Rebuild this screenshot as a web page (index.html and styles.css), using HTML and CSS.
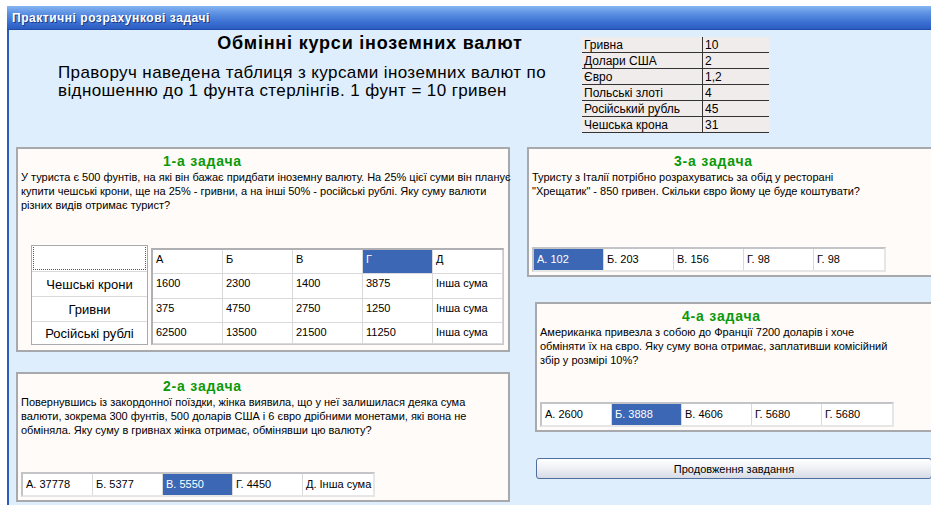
FILE: index.html
```html
<!DOCTYPE html>
<html lang="uk">
<head>
<meta charset="utf-8">
<title>Практичні розрахункові задачі</title>
<link rel="stylesheet" href="styles.css">
</head>
<body>
<div class="window">
  <div class="titlebar">Практичні розрахункові задачі</div>
  <div class="client">
    <header class="top">
      <div class="intro">
        <h1>Обмінні курси іноземних валют</h1>
        <p>Праворуч наведена таблиця з курсами іноземних валют по<br>відношенню до 1 фунта стерлінгів. 1 фунт = 10 гривен</p>
      </div>
      <table class="rates">
        <tr><td>Гривна</td><td>10</td></tr>
        <tr><td>Долари США</td><td>2</td></tr>
        <tr><td>Євро</td><td>1,2</td></tr>
        <tr><td>Польські злоті</td><td>4</td></tr>
        <tr><td>Російський рубль</td><td>45</td></tr>
        <tr><td>Чешська крона</td><td>31</td></tr>
      </table>
    </header>

    <div class="columns">
      <div class="col col-left">
        <section class="task task1">
          <h2>1-а задача</h2>
          <p>У туриста є 500 фунтів, на які він бажає придбати іноземну валюту. На 25% цієї суми він планує<br>купити чешські крони, ще на 25% - гривни, а на інші 50% - російські рублі. Яку суму валюти<br>різних видів отримає турист?</p>
          <div class="matrix">
            <div class="row-heads">
              <div class="rh rh-focus"></div>
              <div class="rh">Чешські крони</div>
              <div class="rh">Гривни</div>
              <div class="rh">Російські рублі</div>
            </div>
            <div class="grid">
              <div class="gc">А</div><div class="gc">Б</div><div class="gc">В</div><div class="gc sel">Г</div><div class="gc">Д</div>
              <div class="gc">1600</div><div class="gc">2300</div><div class="gc">1400</div><div class="gc">3875</div><div class="gc">Інша сума</div>
              <div class="gc">375</div><div class="gc">4750</div><div class="gc">2750</div><div class="gc">1250</div><div class="gc">Інша сума</div>
              <div class="gc">62500</div><div class="gc">13500</div><div class="gc">21500</div><div class="gc">11250</div><div class="gc">Інша сума</div>
            </div>
          </div>
        </section>

        <section class="task task2">
          <h2>2-а задача</h2>
          <p>Повернувшись із закордонної поїздки, жінка виявила, що у неї залишилася деяка сума<br>валюти, зокрема 300 фунтів, 500 доларів США і 6 євро дрібними монетами, які вона не<br>обміняла. Яку суму в гривнах жінка отримає, обмінявши цю валюту?</p>
          <div class="answers">
            <div class="ans">А. 37778</div><div class="ans">Б. 5377</div><div class="ans sel">В. 5550</div><div class="ans">Г. 4450</div><div class="ans">Д. Інша сума</div>
          </div>
        </section>
      </div>

      <div class="col col-right">
        <section class="task task3">
          <h2>3-а задача</h2>
          <p>Туристу з Італії потрібно розрахуватись за обід у ресторані<br>"Хрещатик" - 850 гривен. Скільки євро йому це буде коштувати?</p>
          <div class="answers">
            <div class="ans sel">А. 102</div><div class="ans">Б. 203</div><div class="ans">В. 156</div><div class="ans">Г. 98</div><div class="ans">Г. 98</div>
          </div>
        </section>

        <section class="task task4">
          <h2>4-а задача</h2>
          <p>Американка привезла з собою до Франції 7200 доларів і хоче<br>обміняти їх на євро. Яку суму вона отримає, заплативши комісійний<br>збір у розмірі 10%?</p>
          <div class="answers">
            <div class="ans">А. 2600</div><div class="ans sel">Б. 3888</div><div class="ans">В. 4606</div><div class="ans">Г. 5680</div><div class="ans">Г. 5680</div>
          </div>
        </section>

        <button class="next" type="button">Продовження завдання</button>
      </div>
    </div>
  </div>
</div>
</body>
</html>
```

FILE: styles.css
```css
html, body {
  margin: 0;
  background: #ffffff;
  overflow: hidden;
}

body {
  padding-top: 6px;
  font-family: "Liberation Sans", Arial, sans-serif;
  color: #000;
}

.window {
  margin-left: 7px;
  width: 945px;
}

/* window caption */
.titlebar {
  height: 23px;
  line-height: 24px;
  padding-left: 5px;
  border-bottom: 1px solid #1f4dab;
  background: linear-gradient(#86b5f4 0%, #5e93e3 30%, #3c70d3 70%, #2c5cc1 100%);
  color: #fff;
  font-family: "Liberation Sans", Arial, sans-serif;
  font-size: 12px;
  font-weight: bold;
  letter-spacing: 0.55px;
  text-shadow: 1px 1px 0 #1b3b86;
}

.client {
  height: 480px;
  padding-left: 7px;
  background: #dfeefd;
  border-left: 2px solid #2a5bc0;
}

/* heading + rates table */
.top {
  display: flex;
  height: 117px;
}

.intro {
  width: 566px;
}

.intro h1 {
  width: 420px;
  margin: 3px 0 0 144px;
  font-size: 18px;
  line-height: 20px;
  font-weight: bold;
  letter-spacing: 0.8px;
  text-align: center;
  white-space: nowrap;
}

.intro p {
  margin: 11px 0 0 42px;
  font-size: 17px;
  line-height: 18px;
  letter-spacing: 0.4px;
  white-space: nowrap;
}

.rates {
  margin-top: 7px;
  align-self: flex-start;
  border-collapse: collapse;
  font-size: 12px;
  background: #f1ecec;
}

.rates td {
  height: 14px;
  line-height: 14px;
  padding: 1px 2px 0 2px;
  border-bottom: 1px solid #333;
  white-space: nowrap;
}

.rates td:first-child {
  width: 116px;
  border-right: 1px solid #333;
}

.rates td:last-child {
  width: 62px;
}

/* two columns of task panels */
.columns {
  display: flex;
  gap: 17px;
}

.col {
  display: flex;
  flex-direction: column;
}

.col-left {
  width: 494px;
  gap: 20px;
}

.col-right {
  width: 412px;
}

.task {
  box-sizing: border-box;
  display: flex;
  flex-direction: column;
  background: #fffbf8;
  border: 2px solid #a7a9ad;
  padding: 4px 0 0 3px;
}

.task h2 {
  margin: 0 0 0 142px;
  font-size: 14px;
  line-height: 17px;
  font-weight: bold;
  color: #0a990a;
  letter-spacing: 0.8px;
}

.task p {
  margin: 0;
  font-size: 11px;
  line-height: 14px;
  white-space: nowrap;
}

.task1 { height: 205px; }
.task2 { height: 130px; }
.task3 { height: 130px; }
.task4 { height: 130px; margin: 25px 0 0 8px; }

/* answer strip */
.answers {
  display: flex;
  margin: auto 0 3px 0;
  align-self: flex-start;
  border: 2px solid #c2c4c8;
  border-right-color: #e6e6e6;
  border-bottom-color: #e6e6e6;
  background: #fff;
}

.ans {
  box-sizing: border-box;
  width: 70px;
  height: 21px;
  line-height: 20px;
  padding-left: 3px;
  font-size: 11px;
  border-right: 1px solid #d9d9d9;
  white-space: nowrap;
}

.ans:last-child { border-right: 0; }

.sel {
  background: #3b67b4;
  color: #fff;
}

/* task 1 table */
.matrix {
  display: flex;
  align-items: flex-end;
  gap: 3px;
  margin: auto 0 5px 10px;
}

.row-heads {
  display: flex;
  flex-direction: column;
  width: 117px;
  box-sizing: border-box;
  border: 1px solid #a8aaae;
  background: #fff;
}

.rh {
  box-sizing: border-box;
  height: 25px;
  line-height: 26px;
  font-size: 13px;
  text-align: center;
  border-top: 1px solid #dadada;
  white-space: nowrap;
}

.rh:first-child { border-top: 0; }
.rh:last-child { height: 23px; line-height: 24px; }

.rh-focus {
  margin: 1px;
  height: 23px;
  border: 1px dotted #555;
}

.grid {
  display: grid;
  grid-template-columns: repeat(5, 70px);
  grid-template-rows: 24px 25px 24px 21px;
  border: 2px solid #aeb0b4;
  border-right: 1px solid #c8c8c8;
  border-bottom: 1px solid #c8c8c8;
  background: #fff;
}

.gc {
  box-sizing: border-box;
  padding: 3px 0 0 3px;
  font-size: 11px;
  line-height: 13px;
  border-right: 1px solid #d9d9d9;
  border-bottom: 1px solid #d9d9d9;
  white-space: nowrap;
}

/* continue button */
.next {
  margin: 26px 0 0 9px;
  width: 396px;
  height: 21px;
  padding: 0;
  border: 1px solid #4f6f9f;
  border-radius: 3px;
  background: linear-gradient(#ffffff, #eef0f5 50%, #d6dbe6);
  font: 11px "Liberation Sans", Arial, sans-serif;
  color: #000;
  text-align: center;
}
```
